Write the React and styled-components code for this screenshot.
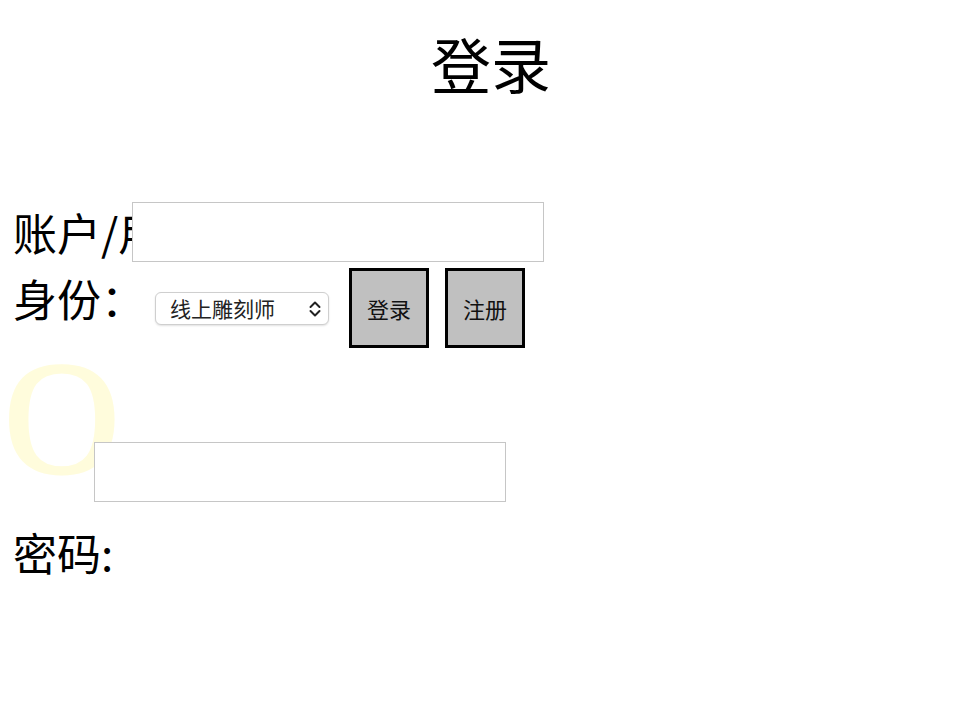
import React from 'react';
import styled, { createGlobalStyle } from 'styled-components';

const GlobalStyle = createGlobalStyle`
  body {
    margin: 8px;
    background: #fff;
    color: #000;
    font-family: "Noto Sans CJK SC", "Noto Sans", sans-serif;
  }
`;

const Title = styled.h1`
  margin: 11px 0 0;
  padding-left: 18px;
  font-size: 60px;
  font-weight: 400;
  line-height: 87px;
  text-align: center;
`;

const Form = styled.form`
  display: flex;
  flex-direction: column;
  margin-top: 95px;
`;

const Row = styled.div`
  display: flex;
  align-items: ${(p) => p.align || 'center'};
  margin-top: ${(p) => p.top || 0}px;
`;

const Label = styled.span`
  font-size: 44px;
  line-height: 62px;
  white-space: nowrap;
  padding-left: 5px;
  box-sizing: border-box;
  width: ${(p) => (p.width ? `${p.width}px` : 'auto')};
  overflow: ${(p) => (p.width ? 'hidden' : 'visible')};
  flex-shrink: 0;
  align-self: ${(p) => p.self || 'auto'};
  margin-top: ${(p) => p.top || 0}px;
`;

const TextInput = styled.input`
  box-sizing: border-box;
  width: 412px;
  height: 60px;
  border: 1px solid #c6c6c6;
  background: #fff;
  margin: ${(p) => p.m || '0'};
  padding: 0 8px;
  font-size: 20px;
  outline: none;
`;

const SelectWrap = styled.div`
  position: relative;
  margin-left: 10px;
`;

const Select = styled.select`
  appearance: none;
  box-sizing: border-box;
  width: 174px;
  height: 33px;
  padding: 0 30px 0 14px;
  border: 1px solid #cfcfcf;
  border-radius: 6px;
  background: #fff;
  box-shadow: 0 1px 2px rgba(0, 0, 0, 0.12);
  font-family: "Noto Sans CJK SC", sans-serif;
  font-size: 21px;
  color: #222;
`;

const Chevron = styled.svg`
  position: absolute;
  right: 7px;
  top: 7px;
  pointer-events: none;
`;

const SquareButton = styled.button`
  box-sizing: border-box;
  width: 80px;
  height: 80px;
  margin-left: ${(p) => p.gap}px;
  border: 3px solid #000;
  background: #c0c0c0;
  font-family: "Noto Sans CJK SC", sans-serif;
  font-size: 22px;
  color: #111;
  padding: 0;
`;

const BigLetter = styled.span`
  font-family: "Liberation Serif", serif;
  font-size: 160px;
  font-weight: 400;
  line-height: 130px;
  color: #fffcdc;
  -webkit-text-stroke: 3px #fffcdc;
  margin: 5px -26px 0 -4px;
  flex-shrink: 0;
`;

const App = () => (
  <>
    <GlobalStyle />
    <Title>登录</Title>
    <Form onSubmit={(e) => e.preventDefault()}>
      <Row>
        <Label width={124}>账户/用户名：</Label>
        <TextInput type="text" />
      </Row>
      <Row top={5}>
        <Label self="flex-start" top={-1}>身份：</Label>
        <SelectWrap>
          <Select defaultValue="carver">
            <option value="carver">线上雕刻师</option>
          </Select>
          <Chevron width="14" height="20" viewBox="0 0 14 20">
            <path d="M2.5 8 L7 3.5 L11.5 8 M2.5 12 L7 16.5 L11.5 12" fill="none" stroke="#222" strokeWidth="2" strokeLinecap="round" strokeLinejoin="round" />
          </Chevron>
        </SelectWrap>
        <SquareButton type="submit" gap={20}>登录</SquareButton>
        <SquareButton type="button" gap={16}>注册</SquareButton>
      </Row>
      <Row align="flex-start">
        <BigLetter>O</BigLetter>
        <TextInput type="password" m="94px 0 0 0" />
      </Row>
      <Row>
        <Label top={19}>密码:</Label>
      </Row>
    </Form>
  </>
);

export default App;
